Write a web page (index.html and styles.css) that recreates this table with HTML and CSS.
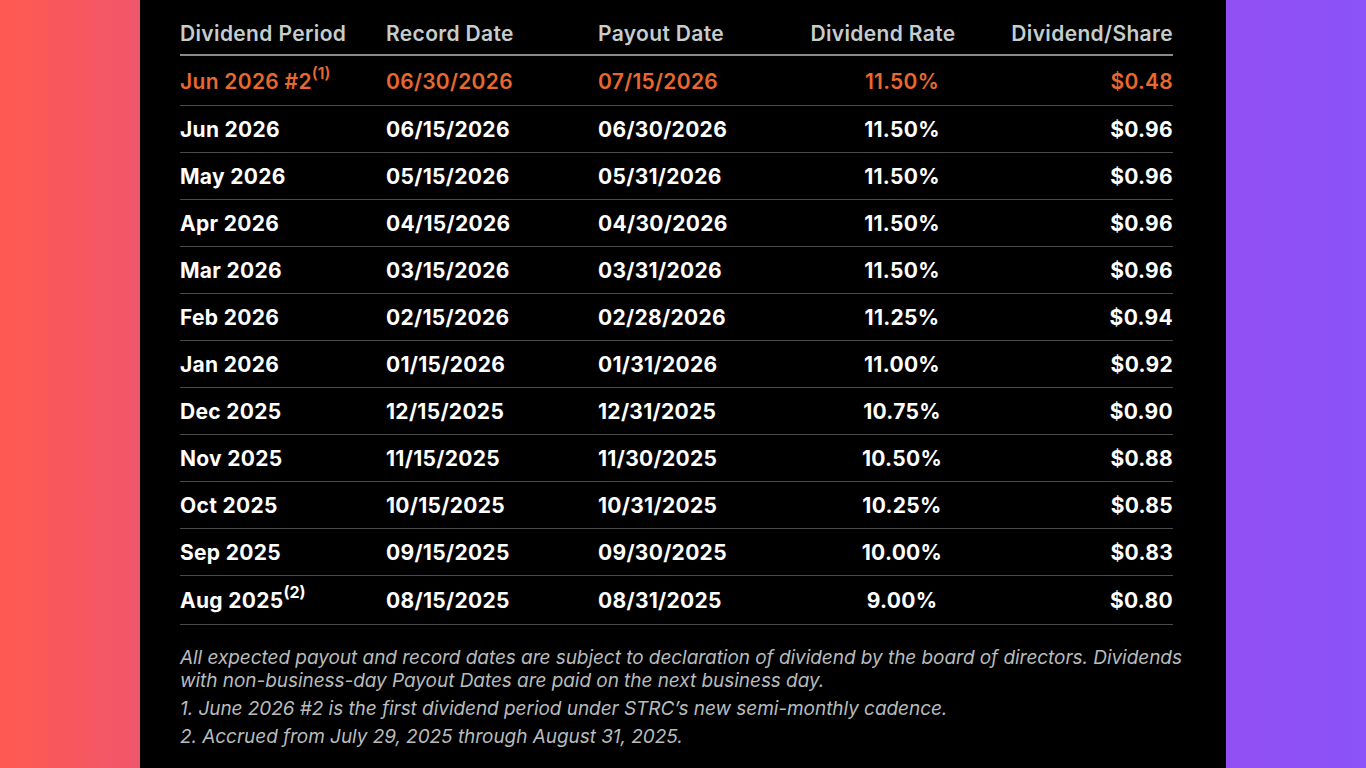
FILE: index.html
```html
<!DOCTYPE html>
<html lang="en">
<head>
<meta charset="utf-8">
<title>Dividend Schedule</title>
<link rel="stylesheet" href="styles.css">
</head>
<body>
<div class="stage">
  <main class="panel">
    <div class="table">
      <div class="row head">
        <div class="c1">Dividend Period</div>
        <div class="c2">Record Date</div>
        <div class="c3">Payout Date</div>
        <div class="c4">Dividend Rate</div>
        <div class="c5">Dividend/Share</div>
      </div>
      <div class="row tall hl">
        <div class="c1">Jun 2026 #2<sup>(1)</sup></div>
        <div class="c2">06/30/2026</div>
        <div class="c3">07/15/2026</div>
        <div class="c4">11.50%</div>
        <div class="c5">$0.48</div>
      </div>
      <div class="row">
        <div class="c1">Jun 2026</div><div class="c2">06/15/2026</div><div class="c3">06/30/2026</div><div class="c4">11.50%</div><div class="c5">$0.96</div>
      </div>
      <div class="row">
        <div class="c1">May 2026</div><div class="c2">05/15/2026</div><div class="c3">05/31/2026</div><div class="c4">11.50%</div><div class="c5">$0.96</div>
      </div>
      <div class="row">
        <div class="c1">Apr 2026</div><div class="c2">04/15/2026</div><div class="c3">04/30/2026</div><div class="c4">11.50%</div><div class="c5">$0.96</div>
      </div>
      <div class="row">
        <div class="c1">Mar 2026</div><div class="c2">03/15/2026</div><div class="c3">03/31/2026</div><div class="c4">11.50%</div><div class="c5">$0.96</div>
      </div>
      <div class="row">
        <div class="c1">Feb 2026</div><div class="c2">02/15/2026</div><div class="c3">02/28/2026</div><div class="c4">11.25%</div><div class="c5">$0.94</div>
      </div>
      <div class="row">
        <div class="c1">Jan 2026</div><div class="c2">01/15/2026</div><div class="c3">01/31/2026</div><div class="c4">11.00%</div><div class="c5">$0.92</div>
      </div>
      <div class="row">
        <div class="c1">Dec 2025</div><div class="c2">12/15/2025</div><div class="c3">12/31/2025</div><div class="c4">10.75%</div><div class="c5">$0.90</div>
      </div>
      <div class="row">
        <div class="c1">Nov 2025</div><div class="c2">11/15/2025</div><div class="c3">11/30/2025</div><div class="c4">10.50%</div><div class="c5">$0.88</div>
      </div>
      <div class="row">
        <div class="c1">Oct 2025</div><div class="c2">10/15/2025</div><div class="c3">10/31/2025</div><div class="c4">10.25%</div><div class="c5">$0.85</div>
      </div>
      <div class="row">
        <div class="c1">Sep 2025</div><div class="c2">09/15/2025</div><div class="c3">09/30/2025</div><div class="c4">10.00%</div><div class="c5">$0.83</div>
      </div>
      <div class="row tall last">
        <div class="c1">Aug 2025<sup>(2)</sup></div><div class="c2">08/15/2025</div><div class="c3">08/31/2025</div><div class="c4">9.00%</div><div class="c5">$0.80</div>
      </div>
    </div>
    <div class="notes">
      <p>All expected payout and record dates are subject to declaration of dividend by the board of directors. Dividends with non-business-day Payout Dates are paid on the next business day.</p>
      <p>1. June 2026 #2 is the first dividend period under STRC’s new semi-monthly cadence.</p>
      <p>2. Accrued from July 29, 2025 through August 31, 2025.</p>
    </div>
  </main>
</div>
</body>
</html>
```

FILE: styles.css
```css
* { box-sizing: border-box; }
html, body { margin: 0; padding: 0; }
body {
  width: 1366px;
  height: 768px;
  overflow: hidden;
  font-family: Inter, "Noto Sans", sans-serif;
  background: linear-gradient(to right, #ff5a51 0%, #f0566b 10.25%, #914ff1 89.75%, #8b53f9 100%);
}
.stage {
  height: 768px;
  display: flex;
  justify-content: center;
}
.panel {
  width: 1086px;
  height: 768px;
  background: #000;
  padding: 18px 40px 0 40px;
}
.table {
  width: 993px;
}
.row {
  display: grid;
  grid-template-columns: 206px 212px 198px 212px 165px;
  align-items: center;
  height: 47px;
  border-bottom: 1px solid #4a4a4a;
  color: #fff;
  font-size: 21px;
  letter-spacing: 0.3px;
  font-weight: 700;
}
.row.tall { height: 50px; padding-top: 1px; }
.row.tall.last { height: 49px; }
.row.head {
  height: 38px;
  border-bottom: 2px solid #8a8a8a;
  color: #c6cdcd;
  font-weight: 600;
  align-items: start;
  padding-top: 3px;
  letter-spacing: 0.35px;
}
.row.hl { color: #e8682f; font-weight: 600; }
.c4 { text-align: center; }
.head .c4 { padding-right: 38px; }
.c5 { text-align: right; }
sup {
  font-size: 16px;
  line-height: 0;
  vertical-align: 0;
  position: relative;
  top: -10px;
  letter-spacing: 0;
}
.notes {
  margin-top: 21px;
  width: 1006px;
  color: #b9bcbc;
  font-style: italic;
  font-size: 19px;
  letter-spacing: -0.05px;
  line-height: 23px;
}
.notes p { margin: 0 0 5px 0; }
```
